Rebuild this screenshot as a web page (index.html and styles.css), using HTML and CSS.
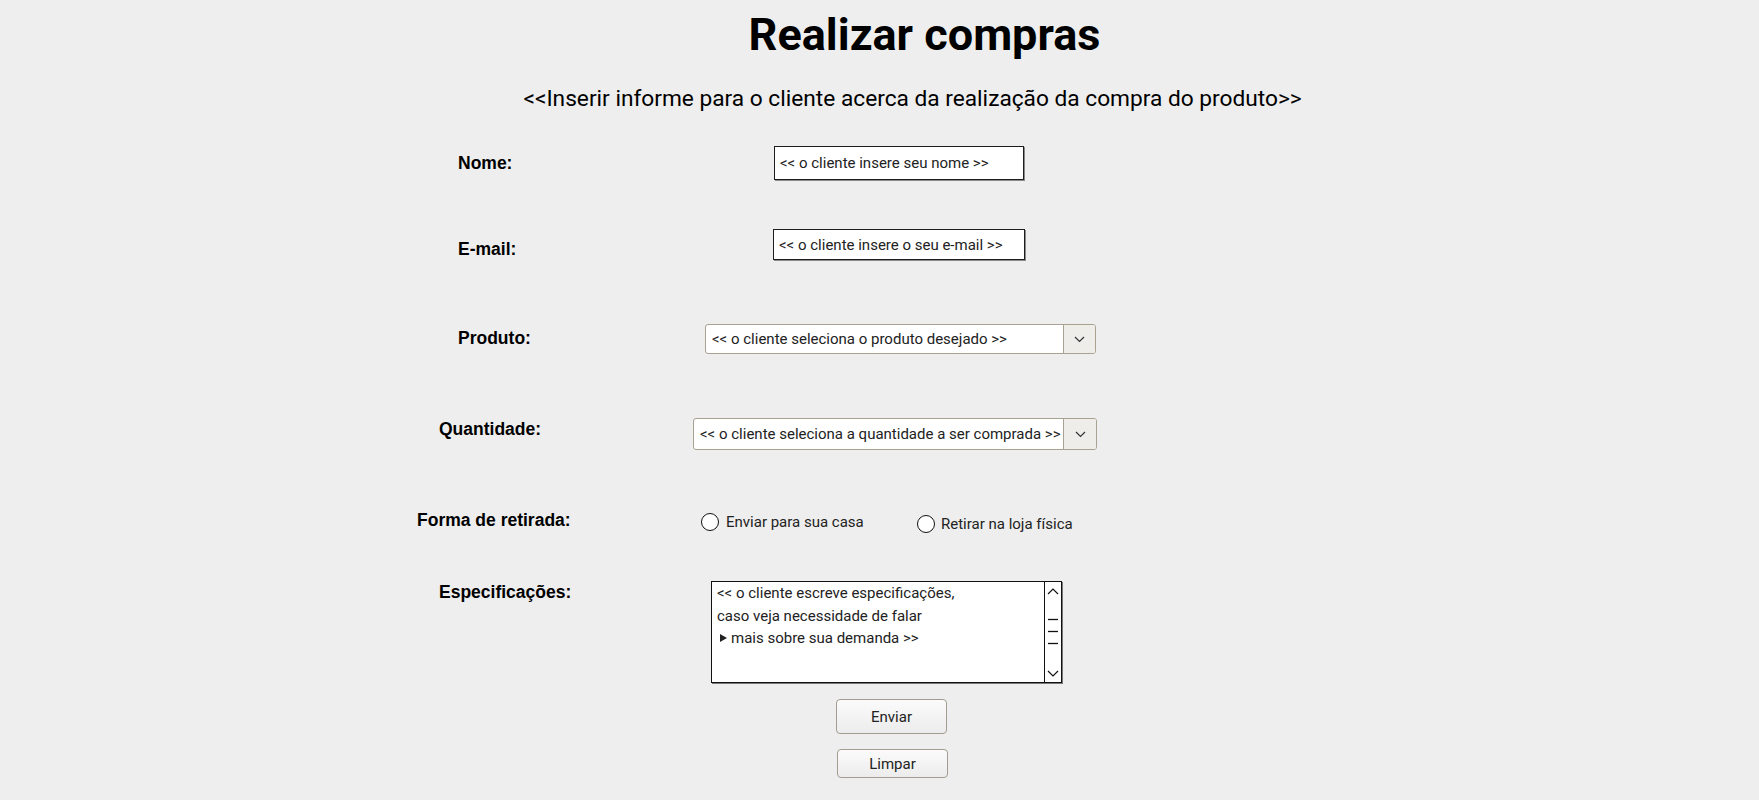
FILE: index.html
```html
<!DOCTYPE html>
<html lang="pt-BR">
<head>
<meta charset="utf-8">
<title>Realizar compras</title>
<link rel="stylesheet" href="styles.css">
</head>
<body>
<main class="page">
  <h1 class="title">Realizar compras</h1>
  <p class="subtitle">&lt;&lt;Inserir informe para o cliente acerca da realização da compra do produto&gt;&gt;</p>

  <form class="form">
    <div class="row row-nome">
      <span class="label label-nome">Nome:</span>
      <div class="field field-nome">&lt;&lt; o cliente insere seu nome &gt;&gt;</div>
    </div>

    <div class="row row-email">
      <span class="label label-email">E-mail:</span>
      <div class="field field-email">&lt;&lt; o cliente insere o seu e-mail &gt;&gt;</div>
    </div>

    <div class="row row-produto">
      <span class="label label-produto">Produto:</span>
      <div class="select select-produto">
        <span class="select-text">&lt;&lt; o cliente seleciona o produto desejado &gt;&gt;</span>
        <span class="select-arrow"><svg width="11" height="7" viewBox="0 0 11 7"><polyline points="1,1 5.5,5.5 10,1" fill="none" stroke="#333" stroke-width="1.2"/></svg></span>
      </div>
    </div>

    <div class="row row-quant">
      <span class="label label-quant">Quantidade:</span>
      <div class="select select-quant">
        <span class="select-text">&lt;&lt; o cliente seleciona a quantidade a ser comprada &gt;&gt;</span>
        <span class="select-arrow"><svg width="11" height="7" viewBox="0 0 11 7"><polyline points="1,1 5.5,5.5 10,1" fill="none" stroke="#333" stroke-width="1.2"/></svg></span>
      </div>
    </div>

    <div class="row row-forma">
      <span class="label label-forma">Forma de retirada:</span>
      <div class="radio radio-casa"><span class="radio-dot"></span><span class="radio-text">Enviar para sua casa</span></div>
      <div class="radio radio-loja"><span class="radio-dot"></span><span class="radio-text">Retirar na loja física</span></div>
    </div>

    <div class="row row-espec">
      <span class="label label-espec">Especificações:</span>
      <div class="textarea">
        <div class="textarea-text">
          <div class="line">&lt;&lt; o cliente escreve especificações,</div>
          <div class="line">caso veja necessidade de falar</div>
          <div class="line line-bullet"><span class="bullet"></span>mais sobre sua demanda &gt;&gt;</div>
        </div>
        <div class="scrollbar">
          <svg width="16" height="100" viewBox="0 0 16 100">
            <polyline points="3,12 8,7 13,12" fill="none" stroke="#111" stroke-width="1.2"/>
            <line x1="3" y1="37.5" x2="13" y2="37.5" stroke="#111" stroke-width="1.3"/>
            <line x1="3" y1="49.5" x2="13" y2="49.5" stroke="#111" stroke-width="1.3"/>
            <line x1="3" y1="61.5" x2="13" y2="61.5" stroke="#111" stroke-width="1.3"/>
            <polyline points="3,89 8,94 13,89" fill="none" stroke="#111" stroke-width="1.2"/>
          </svg>
        </div>
      </div>
    </div>

    <div class="row row-enviar">
      <button type="button" class="btn btn-enviar">Enviar</button>
    </div>
    <div class="row row-limpar">
      <button type="button" class="btn btn-limpar">Limpar</button>
    </div>
  </form>
</main>
</body>
</html>
```

FILE: styles.css
```css
html, body {
  margin: 0;
  padding: 0;
  background: #eeeeee;
}

body {
  font-family: Roboto, "Liberation Sans", sans-serif;
  color: #000;
  overflow: hidden;
}

.page {
  width: 1759px;
  height: 800px;
}

.title {
  margin: 9px 0 0 0;
  padding-left: 90px;
  text-align: center;
  font-family: Roboto, sans-serif;
  font-weight: 700;
  font-size: 45px;
  line-height: 52px;
}

.subtitle {
  margin: 25px 0 0 0;
  padding-left: 66px;
  text-align: center;
  font-family: Roboto, sans-serif;
  font-weight: 400;
  font-size: 22.7px;
  line-height: 26px;
}

.form {
  display: flex;
  flex-direction: column;
  margin-top: 34px;
}

.row {
  display: flex;
  align-items: flex-start;
}

.label {
  font-family: "Liberation Sans", Arial, sans-serif;
  font-weight: 700;
  font-size: 17.5px;
  line-height: 20px;
  flex: none;
}

/* Nome */
.row-nome { height: 34px; padding-left: 458px; }
.label-nome { width: 316px; padding-top: 7px; }

/* E-mail */
.row-email { height: 31px; margin-top: 49px; padding-left: 458px; }
.label-email { width: 315px; padding-top: 10px; }

/* Produto */
.row-produto { height: 30px; margin-top: 64px; padding-left: 458px; }
.label-produto { width: 247px; padding-top: 4px; }

/* Quantidade */
.row-quant { height: 32px; margin-top: 64px; padding-left: 439px; }
.label-quant { width: 254px; padding-top: 1px; }

/* Forma */
.row-forma { height: 24px; margin-top: 59px; padding-left: 417px; }
.label-forma { width: 284px; padding-top: 1px; }

/* Especificações */
.row-espec { height: 102px; margin-top: 48px; padding-left: 439px; }
.label-espec { width: 272px; padding-top: 1px; }

/* Buttons */
.row-enviar { margin-top: 16px; padding-left: 836px; }
.row-limpar { margin-top: 15px; padding-left: 837px; }

.field {
  box-sizing: border-box;
  background: #fff;
  border: 1px solid #1e1e1e;
  box-shadow: 1px 1px 0 #8a8a8a;
  font-size: 15px;
  color: #222;
  padding-left: 5px;
  display: flex;
  align-items: center;
  white-space: nowrap;
}

.field-nome { width: 250px; height: 34px; }
.field-email { width: 252px; height: 31px; }

.select {
  box-sizing: border-box;
  display: flex;
  background: #fff;
  border: 1px solid #a9a192;
  border-radius: 3px;
  font-size: 15px;
  color: #222;
  white-space: nowrap;
}

.select-produto { width: 391px; height: 30px; }
.select-quant { width: 404px; height: 32px; }

.select-text {
  flex: 1;
  display: flex;
  align-items: center;
  padding-left: 6px;
  overflow: hidden;
}

.select-arrow {
  flex: none;
  width: 31px;
  display: flex;
  align-items: center;
  justify-content: center;
  background: #efede9;
  border-left: 1px solid #a9a192;
  border-radius: 0 2px 2px 0;
}

.select-quant .select-arrow { width: 32px; }

.radio {
  display: flex;
  align-items: center;
  font-size: 15px;
  color: #222;
}

.radio-casa { margin-top: 4px; width: 216px; }
.radio-loja { margin-top: 6px; }

.radio-dot {
  box-sizing: border-box;
  width: 18px;
  height: 18px;
  border: 1.5px solid #111;
  border-radius: 50%;
  background: #fff;
  margin-right: 7px;
  flex: none;
}

.radio-loja .radio-dot { margin-right: 6px; }

.radio-text { line-height: 18px; }

.textarea {
  box-sizing: border-box;
  width: 351px;
  height: 102px;
  display: flex;
  background: #fff;
  border: 1px solid #111;
  box-shadow: 1px 1px 0 #777;
}

.textarea-text {
  flex: 1;
  padding-left: 5px;
  font-size: 15px;
  line-height: 22.5px;
  color: #222;
}

.line-bullet {
  display: flex;
  align-items: center;
  padding-left: 3px;
}

.bullet {
  width: 0;
  height: 0;
  border-top: 4px solid transparent;
  border-bottom: 4px solid transparent;
  border-left: 7px solid #222;
  margin-right: 4px;
}

.scrollbar {
  flex: none;
  width: 16px;
  border-left: 1px solid #111;
  display: flex;
}

.btn {
  box-sizing: border-box;
  width: 111px;
  margin: 0;
  padding: 0;
  border: 1px solid #a39d91;
  border-radius: 4px;
  background: linear-gradient(#fbfbfb, #ececec);
  font-family: Roboto, sans-serif;
  font-size: 15px;
  color: #222;
}

.btn-enviar { height: 35px; }
.btn-limpar { height: 29px; }
```
